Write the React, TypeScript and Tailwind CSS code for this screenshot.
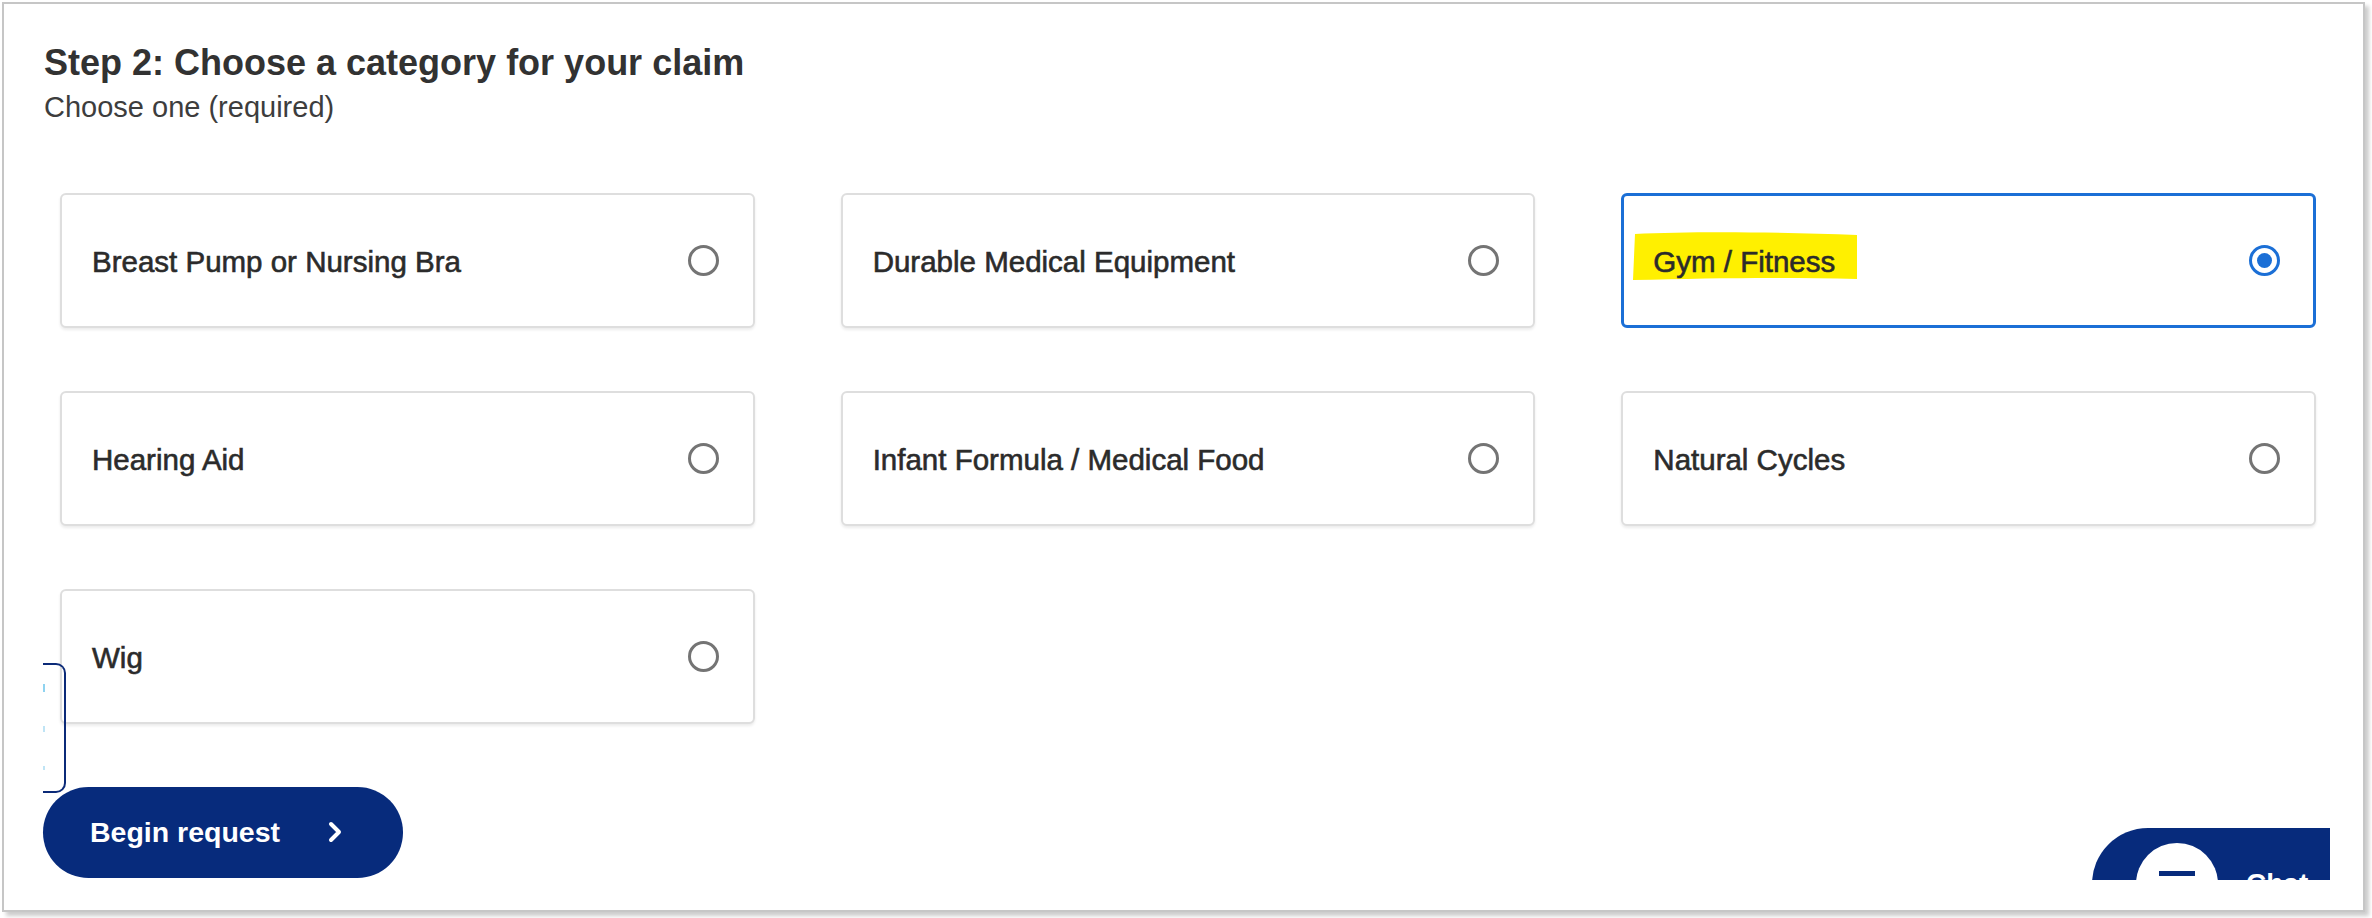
import React, { useState } from "react";

const categories = [
  "Breast Pump or Nursing Bra",
  "Durable Medical Equipment",
  "Gym / Fitness",
  "Hearing Aid",
  "Infant Formula / Medical Food",
  "Natural Cycles",
  "Wig",
];

const Radio = ({ checked }: { checked: boolean }) =>
  checked ? (
    <span className="flex h-[31px] w-[31px] items-center justify-center rounded-full border-[3px] border-[#1b6fd6]">
      <span className="h-[15px] w-[15px] rounded-full bg-[#1b6fd6]" />
    </span>
  ) : (
    <span className="h-[31px] w-[31px] rounded-full border-[3px] border-[#747474]" />
  );

// yellow marker stroke behind the picked label
const Highlight = () => (
  <svg
    className="absolute left-[-20px] top-[-9px] h-[50px] w-[226px]"
    viewBox="0 0 226 50"
    preserveAspectRatio="none"
  >
    <path d="M2 3 C60 0 150 1 224 4 L224 48 C150 46 80 47 0 49 Z" fill="#fff000" />
  </svg>
);

const CategoryCard = ({
  label,
  checked,
  onPick,
}: {
  label: string;
  checked: boolean;
  onPick: () => void;
}) => (
  <button
    type="button"
    onClick={onPick}
    className={
      checked
        ? "flex h-[135px] items-center justify-between rounded-[6px] border-[3px] border-[#1b6fd6] bg-white pl-[29px] pr-[33px] text-left"
        : "flex h-[135px] items-center justify-between rounded-[6px] border-2 border-[#dedede] bg-white pl-[30px] pr-[34px] text-left shadow-[0_2px_3px_rgba(0,0,0,0.08)]"
    }
  >
    <span className="relative mt-[3px] text-[29.5px] text-[#2b2b2b] [-webkit-text-stroke:0.6px_#2b2b2b]">
      {checked && <Highlight />}
      <span className="relative">{label}</span>
    </span>
    <Radio checked={checked} />
  </button>
);

export default function App() {
  const [picked, setPicked] = useState("Gym / Fitness");

  return (
    <div className="h-[918px] w-[2372px] bg-white pl-[2px] pt-[2px] font-['Liberation_Sans',Arial,sans-serif]">
      <div className="relative h-[910px] w-[2363px] overflow-hidden border-2 border-[#c6c6c6] bg-white pt-[37px] shadow-[4px_4px_4px_rgba(0,0,0,0.2)]">
        <div className="pl-[40px]">
          <h2 className="text-[36px] font-bold leading-[1.2] text-[#323232]">
            Step 2: Choose a category for your claim
          </h2>
          <p className="mt-[6px] text-[29px] leading-[1.2] text-[#3d3d3d]">Choose one (required)</p>
        </div>

        <div className="mt-[68px] ml-[56px] grid w-[2256px] grid-cols-3 gap-x-[86px] gap-y-[63px]">
          {categories.map((c) => (
            <CategoryCard key={c} label={c} checked={picked === c} onPick={() => setPicked(c)} />
          ))}
        </div>

        <button
          type="button"
          className="ml-[39px] mt-[63px] flex h-[91px] w-[360px] items-center rounded-full bg-[#072b7c] pl-[47px] text-[28.5px] font-bold text-white"
        >
          Begin request
          <svg className="ml-[48px] h-[22px] w-[14px]" viewBox="0 0 14 22" fill="none">
            <path d="M3 3 L11 11 L3 19" stroke="white" strokeWidth="4" strokeLinecap="round" strokeLinejoin="round" />
          </svg>
        </button>

        {/* focus ring of an off-screen control */}
        <div className="absolute left-[39px] top-[659px] h-[130px] w-[23px] rounded-r-[10px] border-y-2 border-r-2 border-[#0b2a78]" />
        <div className="absolute left-[39px] top-[680px] h-[8px] w-[2px] bg-[#8fd3f0]" />
        <div className="absolute left-[39px] top-[722px] h-[6px] w-[2px] bg-[#bfe4f5]" />
        <div className="absolute left-[39px] top-[762px] h-[4px] w-[2px] bg-[#bfe4f5]" />

        {/* chat launcher, cut off by the viewport */}
        <div className="absolute left-[2088px] top-[824px] h-[52px] w-[238px] overflow-hidden">
          <div className="flex h-[112px] w-[320px] items-center rounded-full bg-[#072b7c] pl-[44px]">
            <span className="flex h-[82px] w-[82px] flex-col items-center justify-center gap-[6px] rounded-full bg-white">
              <span className="h-[5px] w-[36px] bg-[#072b7c]" />
              <span className="h-[5px] w-[34px] bg-[#072b7c]" />
              <span className="h-[5px] w-[34px]" />
            </span>
            <span className="ml-[28px] text-[28px] font-bold text-white">Chat</span>
          </div>
        </div>
      </div>
    </div>
  );
}
